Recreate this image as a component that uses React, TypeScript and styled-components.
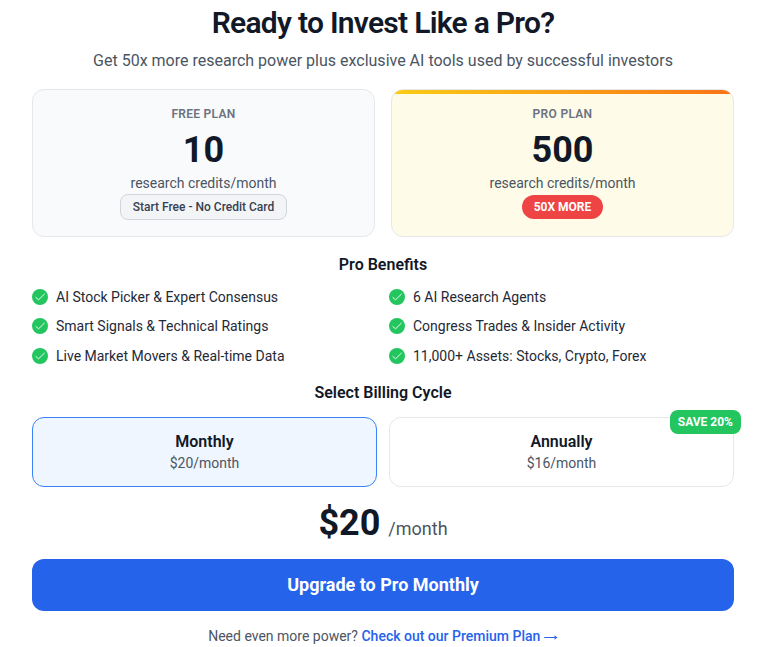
import React from "react";
import styled, { createGlobalStyle } from "styled-components";

const GlobalStyle = createGlobalStyle`
  *, *::before, *::after { box-sizing: border-box; }
  body {
    margin: 0;
    background: #ffffff;
    color: #111827;
    font-family: Roboto, "Liberation Sans", sans-serif;
  }
  h1, h2, p, ul { margin: 0; padding: 0; }
  button { font-family: inherit; cursor: pointer; }
`;

const Page = styled.main`
  display: flex;
  flex-direction: column;
  height: 647px;
  padding: 0 32px;
  overflow: hidden;
`;

const Title = styled.h1`
  padding-top: 5px;
  font-size: 30px;
  font-weight: 600;
  line-height: 36px;
  letter-spacing: -0.72px;
  text-align: center;
`;

const Subtitle = styled.p`
  margin-top: 7px;
  font-size: 16px;
  line-height: 26px;
  color: #4b5563;
  text-align: center;
`;

const Plans = styled.section`
  display: grid;
  grid-template-columns: 1fr 1fr;
  gap: 16px;
  margin-top: 15px;
`;

const PlanCard = styled.article<{ $featured?: boolean }>`
  position: relative;
  display: flex;
  flex-direction: column;
  align-items: center;
  height: 148px;
  padding-top: 14px;
  overflow: hidden;
  border: 1px solid #e5e7eb;
  border-radius: 12px;
  background: ${({ $featured }) => ($featured ? "#fefce8" : "#f9fafb")};

  &::before {
    content: "";
    display: ${({ $featured }) => ($featured ? "block" : "none")};
    position: absolute;
    inset: 0 0 auto;
    height: 4px;
    background: linear-gradient(90deg, #facc15, #f97316);
  }
`;

const PlanName = styled.h2`
  font-size: 12px;
  font-weight: 600;
  line-height: 20px;
  letter-spacing: 0.3px;
  text-transform: uppercase;
  color: #6b7280;
`;

const Credits = styled.div`
  margin-top: 8px;
  font-size: 36px;
  font-weight: 700;
  line-height: 36px;
`;

const CreditsUnit = styled.div`
  margin-top: 4px;
  font-size: 14px;
  line-height: 22px;
  color: #4b5563;
`;

const Tag = styled.span<{ $hot?: boolean }>`
  display: flex;
  align-items: center;
  height: ${({ $hot }) => ($hot ? "24px" : "26px")};
  margin-top: ${({ $hot }) => ($hot ? "0.8px" : "0")};
  padding: 0 12px;
  border: ${({ $hot }) => ($hot ? "none" : "1px solid #d1d5db")};
  border-radius: ${({ $hot }) => ($hot ? "12px" : "8px")};
  background: ${({ $hot }) => ($hot ? "#ef4444" : "#f3f4f6")};
  color: ${({ $hot }) => ($hot ? "#ffffff" : "#374151")};
  font-size: 12px;
  font-weight: ${({ $hot }) => ($hot ? 700 : 500)};
`;

const SectionTitle = styled.h2<{ $top: number }>`
  margin-top: ${({ $top }) => $top}px;
  font-size: 16px;
  font-weight: 600;
  line-height: 24px;
  text-align: center;
`;

const Benefits = styled.ul`
  display: grid;
  grid-template-columns: 1fr 1fr;
  gap: 7px 12px;
  margin-top: 8.9px;
  list-style: none;
`;

const Benefit = styled.li`
  display: flex;
  align-items: center;
  gap: 8px;
  height: 22.4px;
  font-size: 14px;
  line-height: 22.4px;
  color: #1f2937;
`;

const BillingOptions = styled.section`
  display: grid;
  grid-template-columns: 1fr 1fr;
  gap: 12px;
  margin-top: 12px;
`;

const BillingOption = styled.button<{ $selected?: boolean }>`
  position: relative;
  display: flex;
  flex-direction: column;
  align-items: center;
  height: 70px;
  padding: 12px 0 0;
  border: 1px solid ${({ $selected }) => ($selected ? "#3b82f6" : "#e5e7eb")};
  border-radius: 12px;
  background: ${({ $selected }) => ($selected ? "#eff6ff" : "#ffffff")};
`;

const CycleName = styled.span`
  font-size: 16px;
  font-weight: 600;
  line-height: 24px;
  color: #111827;
`;

const CyclePrice = styled.span`
  margin-top: -1px;
  font-size: 14px;
  line-height: 20px;
  color: #4b5563;
`;

const SaveBadge = styled.span`
  position: absolute;
  top: -8px;
  right: -8px;
  padding: 0 8px;
  border-radius: 8px;
  background: #22c55e;
  color: #ffffff;
  font-size: 12px;
  font-weight: 700;
  line-height: 24px;
`;

const PriceLine = styled.div`
  display: flex;
  align-items: baseline;
  justify-content: center;
  gap: 8px;
  height: 58px;
  margin-top: 7px;
  line-height: 58px;
`;

const Amount = styled.span`
  font-size: 36px;
  font-weight: 700;
`;

const Period = styled.span`
  font-size: 18px;
  color: #4b5563;
`;

const UpgradeButton = styled.button`
  height: 52px;
  margin-top: 6.7px;
  padding-bottom: 2px;
  border: none;
  border-radius: 12px;
  background: #2563eb;
  color: #ffffff;
  font-size: 18px;
  font-weight: 700;
`;

const Footnote = styled.p`
  margin-top: 14.3px;
  font-size: 14px;
  line-height: 22px;
  color: #4b5563;
  text-align: center;
`;

const PremiumLink = styled.a`
  color: #2563eb;
  font-weight: 500;
  text-decoration: none;
`;

const Arrow = styled.svg`
  width: 14px;
  height: 7px;
  vertical-align: 0;
`;

const CheckIcon = () => (
  <svg width="16" height="16" viewBox="0 0 16 16" fill="none" aria-hidden="true">
    <circle cx="8" cy="8" r="8" fill="#22c55e" />
    <path d="M3.6 8.3 6.6 10.8 12.7 4.8" stroke="#ffffff" strokeWidth="0.9" />
  </svg>
);

const benefits = [
  "AI Stock Picker & Expert Consensus",
  "6 AI Research Agents",
  "Smart Signals & Technical Ratings",
  "Congress Trades & Insider Activity",
  "Live Market Movers & Real-time Data",
  "11,000+ Assets: Stocks, Crypto, Forex",
];

export default function App() {
  return (
    <>
      <GlobalStyle />
      <Page>
        <Title>Ready to Invest Like a Pro?</Title>
        <Subtitle>
          Get 50x more research power plus exclusive AI tools used by successful investors
        </Subtitle>
        <Plans>
          <PlanCard>
            <PlanName>Free Plan</PlanName>
            <Credits>10</Credits>
            <CreditsUnit>research credits/month</CreditsUnit>
            <Tag>Start Free - No Credit Card</Tag>
          </PlanCard>
          <PlanCard $featured>
            <PlanName>Pro Plan</PlanName>
            <Credits>500</Credits>
            <CreditsUnit>research credits/month</CreditsUnit>
            <Tag $hot>50X MORE</Tag>
          </PlanCard>
        </Plans>
        <SectionTitle $top={16}>Pro Benefits</SectionTitle>
        <Benefits>
          {benefits.map((benefit) => (
            <Benefit key={benefit}>
              <CheckIcon />
              {benefit}
            </Benefit>
          ))}
        </Benefits>
        <SectionTitle $top={13.8}>Select Billing Cycle</SectionTitle>
        <BillingOptions>
          <BillingOption $selected>
            <CycleName>Monthly</CycleName>
            <CyclePrice>$20/month</CyclePrice>
          </BillingOption>
          <BillingOption>
            <CycleName>Annually</CycleName>
            <CyclePrice>$16/month</CyclePrice>
            <SaveBadge>SAVE 20%</SaveBadge>
          </BillingOption>
        </BillingOptions>
        <PriceLine>
          <Amount>$20</Amount>
          <Period>/month</Period>
        </PriceLine>
        <UpgradeButton>Upgrade to Pro Monthly</UpgradeButton>
        <Footnote>
          Need even more power?{" "}
          <PremiumLink href="#">
            Check out our Premium Plan{" "}
            <Arrow viewBox="0 0 14 7" fill="none" aria-hidden="true">
              <path d="M0.3 3.5H13" stroke="currentColor" />
              <path d="M10.2 1.2 13.6 3.5 10.2 5.8 11 3.5Z" fill="currentColor" />
            </Arrow>
          </PremiumLink>
        </Footnote>
      </Page>
    </>
  );
}
